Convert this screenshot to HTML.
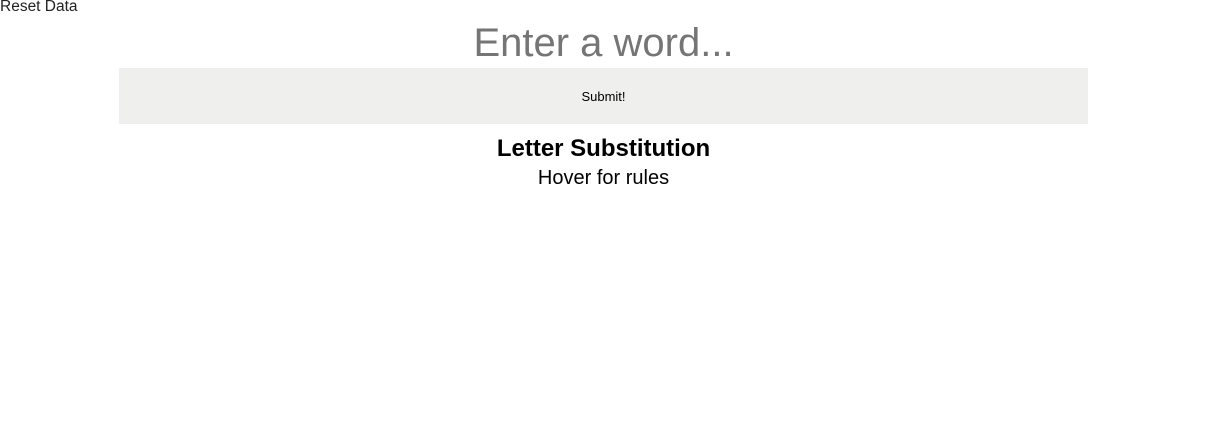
<!DOCTYPE html>
<html><head><style>
body{margin:0;background:#fff;font-family:"Liberation Sans",Arial,sans-serif;width:1207px;height:440px;overflow:hidden;position:relative}
.reset{position:absolute;left:0;top:-2px;font-size:15.5px;color:#222}
.input{position:absolute;left:0;width:1207px;top:21px;text-align:center;font-size:40px;color:#757575}
.btn{position:absolute;left:119px;top:68px;width:969px;height:56px;background:#efefed;font-size:13px;text-align:center;line-height:57px;color:#000}
.title{position:absolute;left:0;width:1207px;top:135px;text-align:center;font-size:24px;font-weight:bold}
.sub{position:absolute;left:0;width:1207px;top:167px;text-align:center;font-size:20px}
</style></head><body>
<div class="reset">Reset Data</div>
<div class="input">Enter a word...</div>
<div class="btn">Submit!</div>
<div class="title">Letter Substitution</div>
<div class="sub">Hover for rules</div>
</body></html>
